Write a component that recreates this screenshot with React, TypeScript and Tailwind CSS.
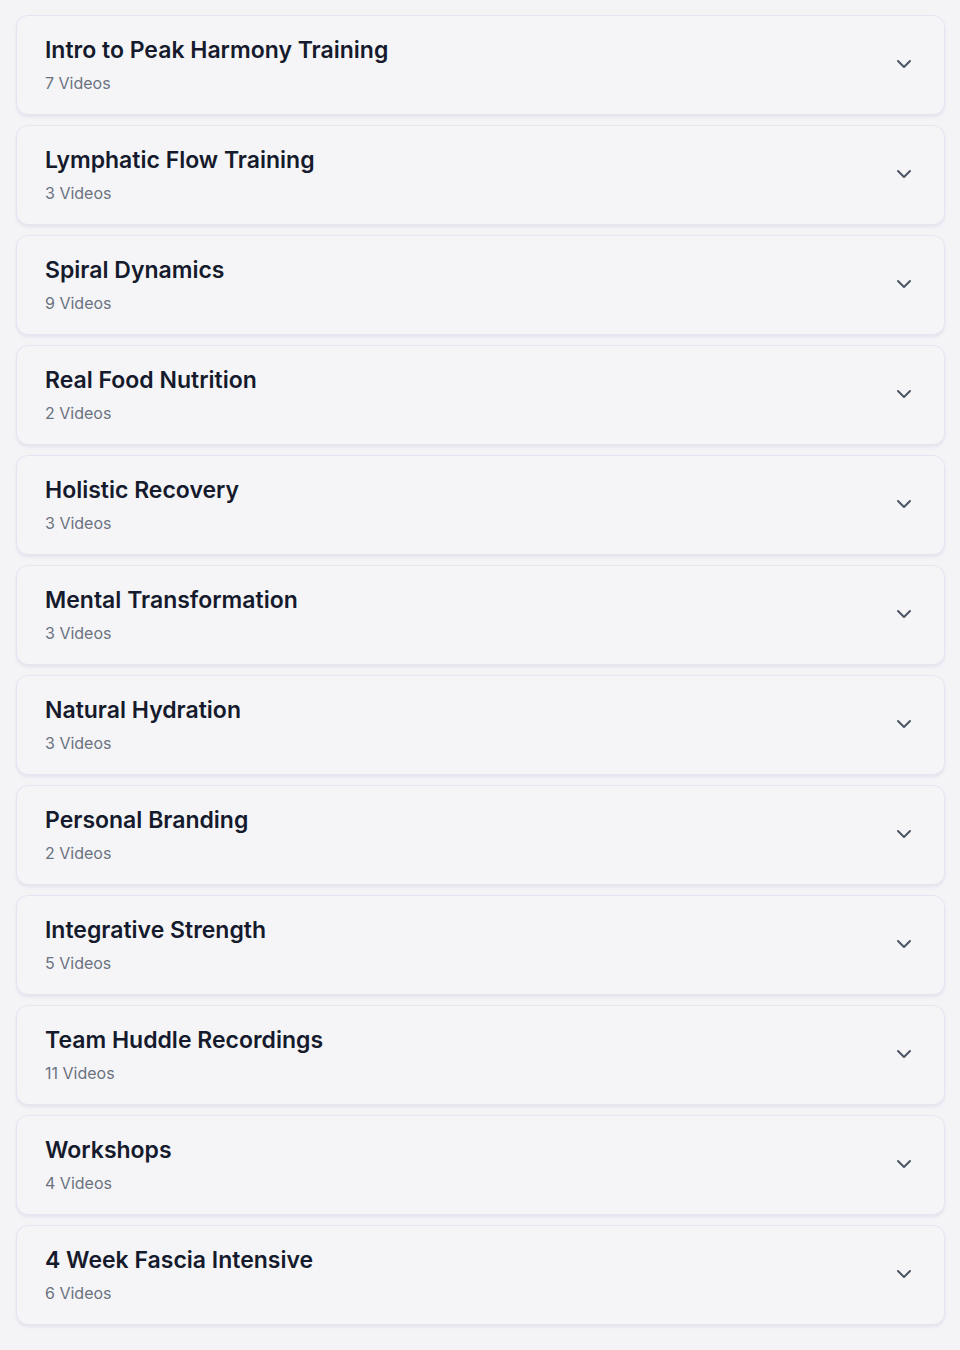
import { ChevronDown } from "lucide-react";

type Course = { title: string; count: number };

const COURSES: Course[] = [
  { title: "Intro to Peak Harmony Training", count: 7 },
  { title: "Lymphatic Flow Training", count: 3 },
  { title: "Spiral Dynamics", count: 9 },
  { title: "Real Food Nutrition", count: 2 },
  { title: "Holistic Recovery", count: 3 },
  { title: "Mental Transformation", count: 3 },
  { title: "Natural Hydration", count: 3 },
  { title: "Personal Branding", count: 2 },
  { title: "Integrative Strength", count: 5 },
  { title: "Team Huddle Recordings", count: 11 },
  { title: "Workshops", count: 4 },
  { title: "4 Week Fascia Intensive", count: 6 },
];

export default function App() {
  return (
    <div
      className="min-h-[1350px] bg-[#f4f4f7] pl-4 pr-[15px] pt-[15px] pb-6"
      style={{ fontFamily: "Inter, 'Noto Sans', sans-serif" }}
    >
      <div className="space-y-2.5">
        {COURSES.map((c) => (
          <button
            key={c.title}
            className="flex w-full items-center justify-between rounded-xl border border-[#e7e4f1] bg-[#f5f5f8] pt-5 pb-[19px] pl-7 pr-7 text-left shadow-[0_2px_3px_rgba(120,110,170,0.12)]"
          >
            <div>
              <h3 className="text-[23px] leading-7 font-semibold text-[#151b2c]">{c.title}</h3>
              <p className="mt-[7px] text-base leading-6 text-[#6b7280]">{c.count} Videos</p>
            </div>
            <ChevronDown size={24} strokeWidth={2} className="mb-1 text-[#4b5563]" />
          </button>
        ))}
      </div>
    </div>
  );
}
